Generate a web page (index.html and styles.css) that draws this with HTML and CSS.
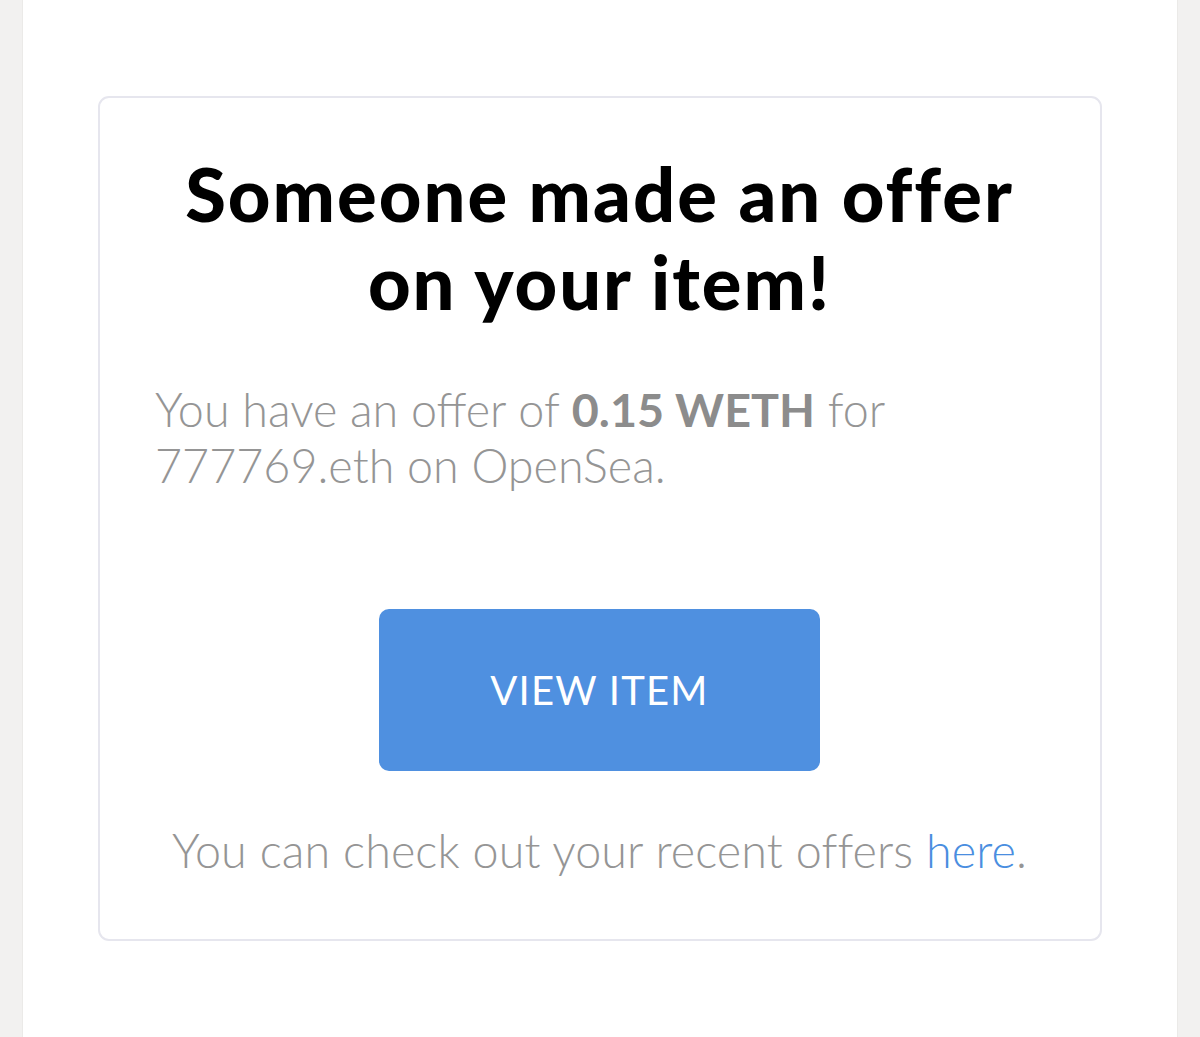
FILE: index.html
```html
<!DOCTYPE html>
<html>
<head>
<meta charset="utf-8">
<link rel="stylesheet" href="styles.css">
</head>
<body>
<div class="panel">
  <div class="card">
    <h1 class="title">Someone made an offer<br>on your item!</h1>
    <p class="body">You have an offer of <strong class="strong">0.15 WETH</strong> for 777769.eth on OpenSea.</p>
    <div class="btn-row"><a class="btn">VIEW ITEM</a></div>
    <p class="foot">You can check out your recent offers <a class="link">here</a>.</p>
  </div>
</div>
</body>
</html>
```
FILE: styles.css
```css
html, body {
  margin: 0;
  padding: 0;
  height: 100%;
}
body {
  background: #f2f1f0;
  font-family: Lato, "Noto Sans", sans-serif;
}
.panel {
  margin: 0 22px;
  background: #ffffff;
  height: 1037px;
  padding: 96px 75px 0 75px;
  box-sizing: border-box;
  border-left: 1px solid #ebeae8;
  border-right: 1px solid #ebeae8;
}
.card {
  border: 2px solid #e6e6ee;
  border-radius: 11px;
  height: 845px;
  box-sizing: border-box;
  padding: 52px 56px 0 55px;
}
.title {
  margin: 0;
  text-align: center;
  font-weight: 900;
  font-size: 74px;
  line-height: 88px;
  letter-spacing: 2px;
  color: #000;
}
.body {
  margin: 55px 0 0 0;
  font-weight: 300;
  font-size: 46.7px;
  line-height: 56px;
  color: #959595;
}
.strong {
  font-weight: 700;
  color: #8c8c8c;
}
.btn-row {
  display: flex;
  justify-content: center;
  margin-top: 116px;
}
.btn {
  display: flex;
  align-items: center;
  justify-content: center;
  width: 441px;
  height: 162px;
  background: #4f90e0;
  border-radius: 10px;
  color: #fff;
  font-size: 40px;
  font-weight: 400;
  letter-spacing: 1.2px;
}
.foot {
  margin: 54px 0 0 0;
  text-align: center;
  font-weight: 300;
  font-size: 46.7px;
  line-height: 51px;
  letter-spacing: 0.1px;
  color: #959595;
}
.link {
  color: #4a8ee0;
}
```
